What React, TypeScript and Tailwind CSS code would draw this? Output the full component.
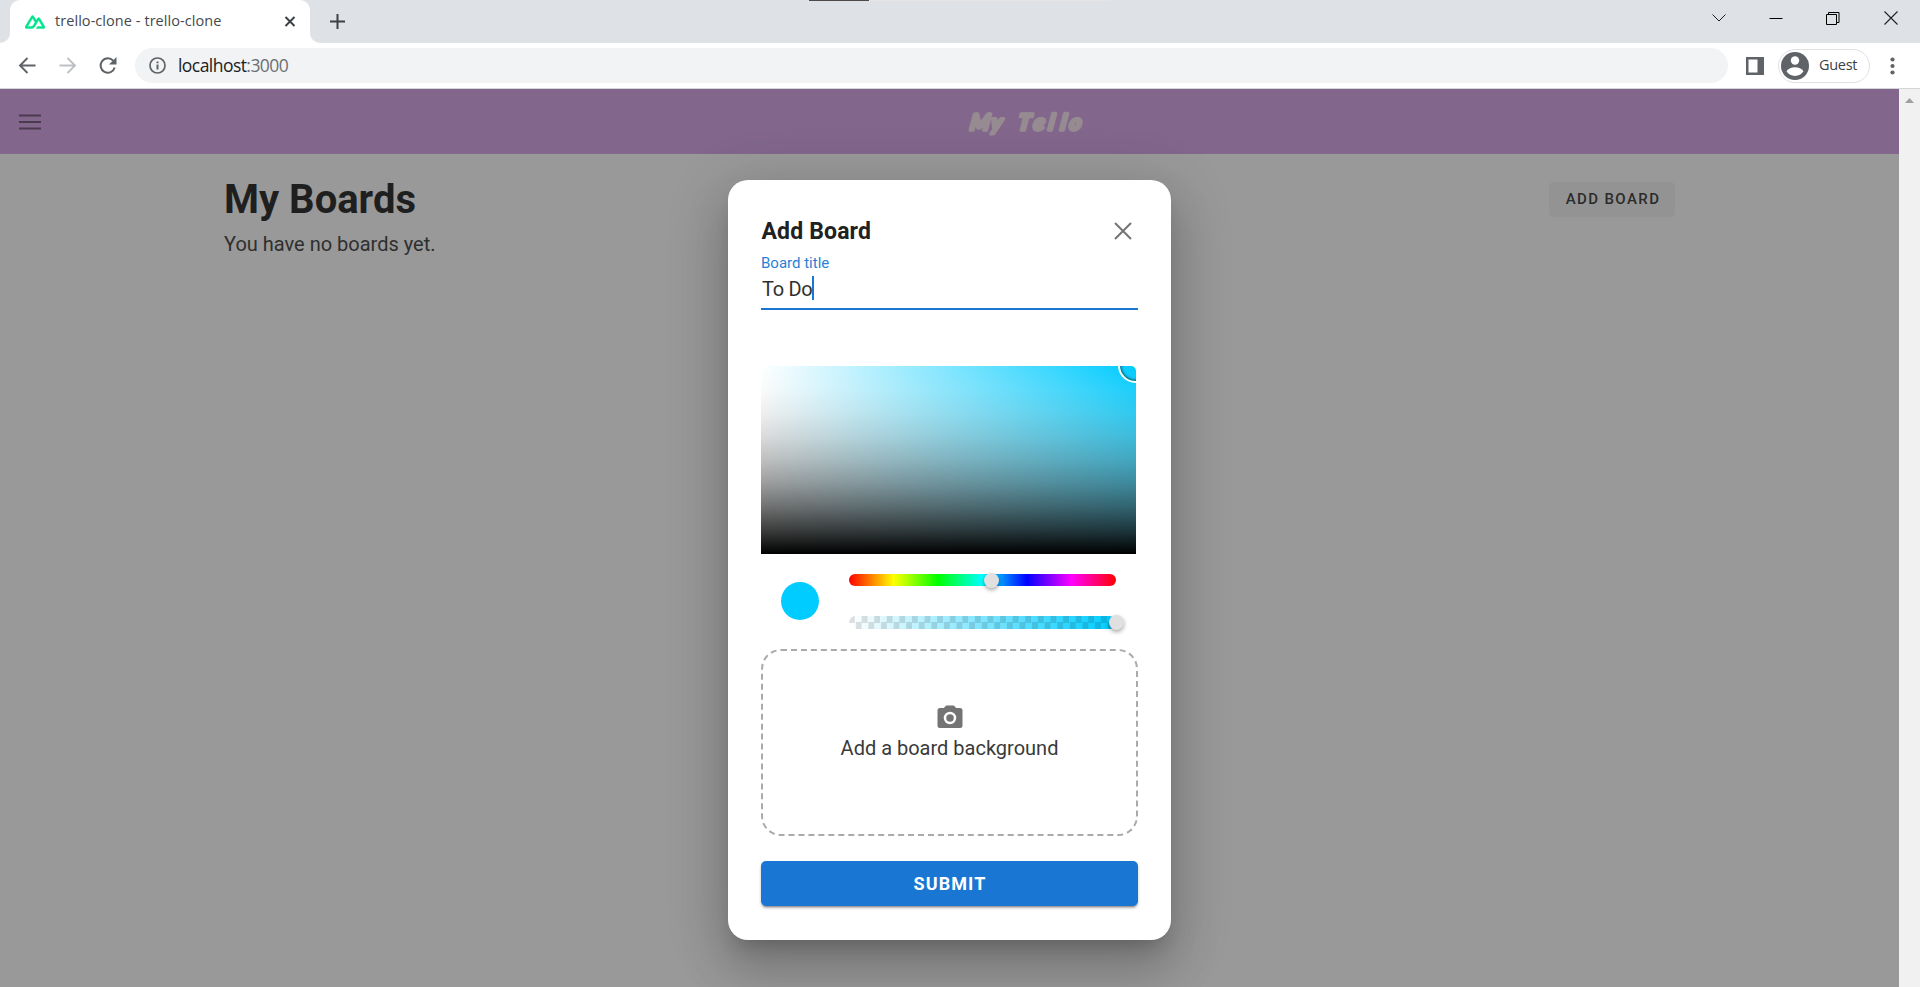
import React from "react";

function NuxtLogo() {
  return (
    <svg className="h-5 w-5 shrink-0" viewBox="0 0 24 24" fill="#00e58c" stroke="#00e58c" strokeWidth="0.5">
      <path d="M13.4642 19.8295h8.9218c.2834 0 .5618-.0723.8072-.2098a1.5899 1.5899 0 0 0 .5908-.5732 1.5293 1.5293 0 0 0 .216-.783 1.529 1.529 0 0 0-.2167-.7828L17.7916 7.4142a1.59 1.59 0 0 0-.5907-.573 1.6524 1.6524 0 0 0-.807-.2099c-.2833 0-.5616.0724-.807.2098a1.59 1.59 0 0 0-.5907.5731L13.4642 9.99l-2.9954-5.0366a1.5913 1.5913 0 0 0-.591-.573 1.6533 1.6533 0 0 0-.8071-.2098c-.2834 0-.5617.0723-.8072.2097a1.5913 1.5913 0 0 0-.591.573L.2168 17.4808A1.5292 1.5292 0 0 0 0 18.2635c-.0001.2749.0744.545.216.783a1.59 1.59 0 0 0 .5908.5732c.2454.1375.5238.2098.8072.2098h5.6003c2.219 0 3.8554-.9454 4.9813-2.7899l2.7337-4.5922L16.3935 9.99l4.3944 7.382h-5.8586ZM7.123 17.3694l-3.9083-.0009 5.8586-9.8421 2.9232 4.921-1.9572 3.2897c-.7478 1.1967-1.5972 1.6323-2.9163 1.6323z" />
    </svg>
  );
}

function TabStrip() {
  return (
    <div className="relative flex h-[43px] items-end bg-[#dee1e6]">
      <div className="flex h-full w-2.5 items-end bg-white">
        <div className="h-full w-full rounded-br-[10px] bg-[#dee1e6]" />
      </div>
      <div className="bg-[#dee1e6]">
        <div className="flex h-[43px] w-[300px] items-center rounded-t-[10px] bg-white pl-[15px] pr-[14px]">
          <NuxtLogo />
          <span className="ml-2.5 flex-1 whitespace-nowrap pb-0.5 font-['Open_Sans',sans-serif] text-[14.5px] tracking-[0.06px] text-[#45494d]">
            trello-clone - trello-clone
          </span>
          <svg className="h-3 w-3" viewBox="0 0 12 12" stroke="#3c4043" strokeWidth="2">
            <path d="M1.5 1l9 9M10.5 1l-9 9" />
          </svg>
        </div>
      </div>
      <div className="flex h-full w-2.5 bg-white">
        <div className="h-full w-full rounded-bl-[10px] bg-[#dee1e6]" />
      </div>
      <svg className="mb-[14px] ml-2.5 h-[15px] w-[15px]" viewBox="0 0 15 15" stroke="#3c4043" strokeWidth="2">
        <path d="M7.5 0v15M0 7.5h15" />
      </svg>
      <div className="flex-1" />
      <div className="mr-[22px] flex h-[43px] items-center pb-[7px]">
        <svg className="h-[14px] w-[14px]" viewBox="0 0 14 14" fill="none" stroke="#202124" strokeWidth="1">
          <path d="M.5 3.500L7 10 13.500 3.500" />
        </svg>
        <svg className="ml-[43px] h-[14px] w-[14px]" viewBox="0 0 14 14">
          <path d="M.5 7.500h13" stroke="#000" />
        </svg>
        <svg className="ml-[43px] h-[14px] w-[14px]" viewBox="0 0 14 14" fill="none" stroke="#000">
          <path d="M.5 3.500h10v10H.5zM2.500 3.500v-2h10.500v10h-2" />
        </svg>
        <svg className="ml-[44px] h-[14px] w-[14px]" viewBox="0 0 14 14" stroke="#202124" strokeWidth="1.100">
          <path d="M.5.5l13 13M13.500.5l-13 13" />
        </svg>
      </div>
      <div className="absolute left-[809px] top-0 flex h-px w-[301px] bg-[#e6e4e4]">
        <div className="w-[60px] bg-[#4e4a4a]" />
      </div>
    </div>
  );
}

function Toolbar() {
  return (
    <div className="flex h-[46px] items-center border-b border-[#d5d6d9] bg-white pl-[18px] pr-[12px]">
      <svg className="h-5 w-5" viewBox="0 0 20 20" fill="none" stroke="#5f6368" strokeWidth="1.9">
        <path d="M17.500 9.500H2.500M9.500 2L2 9.500 9.500 17" />
      </svg>
      <svg className="ml-5 h-5 w-5" viewBox="0 0 20 20" fill="none" stroke="#bdc1c6" strokeWidth="1.900">
        <path d="M1.500 9.500h15M9.500 2L17 9.500 9.500 17" />
      </svg>
      <svg className="ml-5 h-5 w-5" viewBox="0 0 20 20" fill="none">
        <path d="M15.200 4.700A7.200 7.200 0 1 0 16.700 11.500" stroke="#5f6368" strokeWidth="2" />
        <path d="M18.500 1v7.500h-7.500z" fill="#5f6368" />
      </svg>
      <div className="ml-[17px] flex h-[35px] w-[1593px] items-center rounded-full bg-[#f1f3f4] pl-[14px]">
        <svg className="h-[17px] w-[17px]" viewBox="0 0 17 17" fill="none" stroke="#5f6368">
          <circle cx="8.500" cy="8.500" r="7.500" strokeWidth="1.700" />
          <path d="M8.500 7.500v5M8.500 4.400v1.900" strokeWidth="2" />
        </svg>
        <span className="ml-3 font-['Open_Sans',sans-serif] text-[17.5px] tracking-[-0.55px] text-[#202124]">
          localhost<span className="text-[#6b6f73]">:3000</span>
        </span>
      </div>
      <svg className="ml-[18px] h-[18px] w-[18px]" viewBox="0 0 18 18">
        <path d="M0 0h18v18H0zM2.500 2.500v13h9v-13z" fill="#5f6368" fillRule="evenodd" />
      </svg>
      <div className="ml-[14px] flex h-[34px] w-[92px] items-center rounded-full border border-[#dfe1e4] pl-0.5">
        <svg className="h-[28px] w-[28px]" viewBox="0 0 28 28">
          <circle cx="14" cy="14" r="14" fill="#5f6368" />
          <circle cx="14" cy="8.500" r="4.200" fill="#fff" />
          <path d="M5.500 19.300c1.700-2.700 5-4.100 8.500-4.100s6.800 1.400 8.500 4.100c-1.900 2.900-5 4.600-8.500 4.600s-6.600-1.700-8.500-4.600z" fill="#fff" />
        </svg>
        <span className="ml-2.5 pb-px font-['Open_Sans',sans-serif] text-[14.5px] tracking-[-0.3px] text-[#3c4043]">Guest</span>
      </div>
      <svg className="ml-5 h-[18px] w-[5px]" viewBox="0 0 5 18" fill="#5f6368">
        <circle cx="2.500" cy="2.500" r="2.100" />
        <circle cx="2.500" cy="9" r="2.100" />
        <circle cx="2.500" cy="15.500" r="2.100" />
      </svg>
    </div>
  );
}

function AddBoardDialog() {
  return (
    <div className="flex h-[760px] w-[443px] flex-col rounded-[20px] bg-white px-[33px] shadow-[0_14px_19px_-9px_rgba(0,0,0,0.2),0_30px_48px_4px_rgba(0,0,0,0.14),0_11px_58px_10px_rgba(0,0,0,0.12)]">
      <div className="mt-[35px] flex h-8 items-center justify-between">
        <h2 className="whitespace-nowrap pl-[0.5px] pt-0.5 text-[23px] font-bold tracking-[0.15px] text-[#212121]">Add Board</h2>
        <svg className="mr-[6px] h-[18px] w-[18px]" viewBox="0 0 18 18" stroke="#747474" strokeWidth="2">
          <path d="M1 1l16 16M17 1L1 17" />
        </svg>
      </div>
      <label className="mt-[6px] h-[20px] text-[15px] leading-[20px] text-[#2a7fd5]">Board title</label>
      <div className="mt-[2px] flex h-[35px] border-b-2 border-[#1976d2] pl-px">
        <span className="text-[20px] leading-[28px] tracking-[-0.3px] text-[#303030]">To Do</span>
        <span className="mt-px h-6 w-0.5 bg-[#1976d2]" />
      </div>
      <div className="relative mt-[56px] h-[188px] w-[375px] shrink-0 overflow-hidden rounded-t-[5px] bg-[linear-gradient(to_bottom,rgba(255,255,255,0),rgba(223,223,223,0.125),rgba(191,191,191,0.25),rgba(159,159,159,0.375),rgba(128,128,128,0.5),rgba(96,96,96,0.625),rgba(64,64,64,0.75),rgba(32,32,32,0.875),#000),linear-gradient(to_right,#fff,#00ccff)]">
        <div className="absolute -right-[17px] -top-[18px] h-[35px] w-[35px] rounded-full border-2 border-white shadow-[inset_0_0_3px_1px_rgba(0,0,0,0.6)]" />
      </div>
      <div className="mt-5 flex h-[55px] items-center pl-5">
        <div className="mb-0.5 h-[38px] w-[38px] rounded-full bg-[#00ccff]" />
        <div className="ml-[30px] flex h-[55px] w-[267px] flex-col justify-between">
          <div className="relative h-3 rounded-full bg-[linear-gradient(to_right,#f00_0%,#ff0_16.66%,#0f0_33.33%,#0ff_50%,#00f_66.66%,#f0f_83.33%,#f00_100%)]">
            <div className="absolute -top-[1.5px] left-[135px] h-[15px] w-[15px] rounded-full bg-[#e0e0e0] shadow-[0_2px_4px_rgba(0,0,0,0.35)]" />
          </div>
          <div className="relative h-[13px] rounded-full bg-[repeating-conic-gradient(transparent_0_25%,rgba(0,0,0,0.12)_0_50%),linear-gradient(to_right,transparent,#0cf)] bg-[size:12.6px_13px,100%_100%]">
            <div className="absolute -right-[8px] -top-[1.5px] h-[15px] w-[15px] rounded-full bg-[#e0e0e0] shadow-[0_2px_4px_rgba(0,0,0,0.35)]" />
          </div>
        </div>
      </div>
      <div className="mt-5 flex h-[187px] shrink-0 flex-col items-center rounded-[20px] border-2 border-dashed border-[#aaa] pt-[52px]">
        <svg className="h-[30px] w-[30px]" viewBox="0 0 24 24" fill="#747474">
          <path d="M4 4H7L9 2H15L17 4H20A2 2 0 0 1 22 6V18A2 2 0 0 1 20 20H4A2 2 0 0 1 2 18V6A2 2 0 0 1 4 4M12 7A5 5 0 0 0 7 12A5 5 0 0 0 12 17A5 5 0 0 0 17 12A5 5 0 0 0 12 7M12 9A3 3 0 0 1 15 12A3 3 0 0 1 12 15A3 3 0 0 1 9 12A3 3 0 0 1 12 9Z" />
        </svg>
        <span className="text-[20px] leading-[30px] text-[#3a3a3a]">Add a board background</span>
      </div>
      <button className="mt-[25px] h-[45px] rounded-[5px] bg-[#1976d2] pl-px text-[18px] font-bold tracking-[1.1px] text-white shadow-[0_3px_2px_-2px_rgba(0,0,0,0.3),0_2px_3px_rgba(0,0,0,0.25)]">
        SUBMIT
      </button>
    </div>
  );
}

export default function App() {
  return (
    <div className="flex h-[987px] w-[1920px] flex-col overflow-hidden font-[Roboto,sans-serif]">
      <TabStrip />
      <Toolbar />
      <div className="flex min-h-0 flex-1">
        <div className="relative w-[1899px] overflow-hidden bg-[#999]">
          <header className="flex h-[65px] items-center bg-[#82668c] pl-[18px]">
            <svg className="h-[16px] w-[24px]" viewBox="0 0 24 16" stroke="#4a3a50" strokeWidth="2">
              <path d="M1 1.500h22M1 8h22M1 14.500h22" />
            </svg>
            <svg
              className="ml-[922px] h-[40px] w-[124px] font-[Lato,sans-serif] text-[22px] font-bold italic"
              viewBox="0 0 124 40"
              fill="#978b92"
              stroke="#978b92"
              strokeWidth="3.600"
              strokeLinejoin="round"
              strokeLinecap="round"
            >
              <text x="5.500 26.500 46 53.500 69 84 96 105" y="28.500" transform="translate(4 0) skewX(-8)">
                My Tello
              </text>
            </svg>
          </header>
          <main className="flex items-start justify-between pl-[224px] pr-[224px] pt-[21px]">
            <div>
              <h1 className="text-[40px] font-bold leading-[50px] text-[#1f1f1f]">My Boards</h1>
              <p className="mt-[4px] text-[20px] leading-[30px] text-[#2f2f2f]">You have no boards yet.</p>
            </div>
            <button className="mt-[7px] h-[35px] w-[126px] rounded-[5px] bg-[#939393] pl-0.5 text-[15px] font-medium tracking-[1.4px] text-[#2b2b2b]">
              ADD BOARD
            </button>
          </main>
          <div className="absolute inset-0 flex items-start justify-center pt-[91px]">
            <AddBoardDialog />
          </div>
        </div>
        <div className="flex w-[21px] flex-col items-center bg-[#f1f1f1] pt-[9px]">
          <svg className="h-[5px] w-[9px]" viewBox="0 0 9 5">
            <path d="M0 5L4.500 0 9 5z" fill="#a0a0a0" />
          </svg>
        </div>
      </div>
    </div>
  );
}
